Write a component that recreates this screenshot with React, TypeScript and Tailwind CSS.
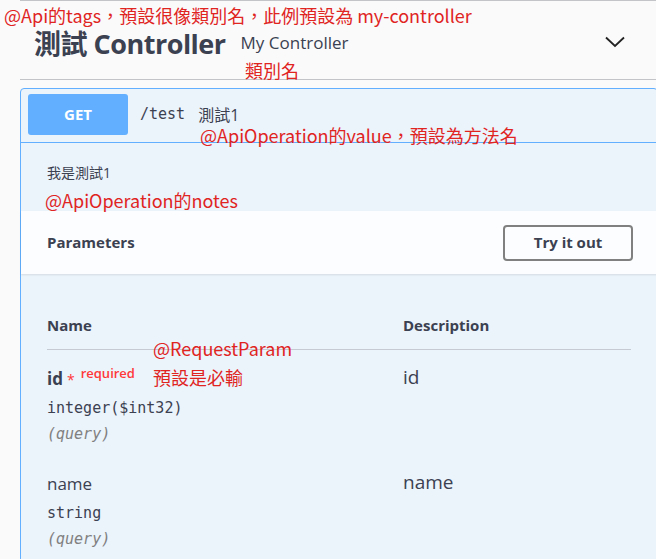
import React from "react";

const sans = "font-['Open_Sans','Noto_Sans_CJK_TC',sans-serif]";
const mono = "font-['DejaVu_Sans_Mono','Noto_Sans_CJK_TC',monospace]";
const note =
  "absolute whitespace-nowrap font-['Noto_Sans_CJK_TC','Noto_Sans',sans-serif] text-[18px] leading-[22px] text-[#e0241f]";

function Chevron() {
  return (
    <svg width="22" height="14" viewBox="0 0 22 14" fill="none">
      <path d="M2 2.5 L11 11 L20 2.5" stroke="#222" strokeWidth="1.8" />
    </svg>
  );
}

function ParamRow({
  name,
  type,
  required,
  desc,
}: {
  name: string;
  type: string;
  required?: boolean;
  desc: string;
}) {
  return (
    <div className="flex">
      <div className="w-[356px]">
        <div className="flex items-start h-[22px]">
          <span
            className={
              required
                ? "text-[17px] leading-[22px] font-bold text-[#3b4151]"
                : "text-[17px] leading-[22px] text-[#3b4151]"
            }
          >
            {name}
          </span>
          {required && (
            <>
              <span className="ml-[4px] mt-[2px] text-[14px] leading-[20px] text-[#ff3838]">*</span>
              <span className="ml-[6px] mt-[-5px] text-[13px] font-semibold leading-[20px] text-[#ff3838]">
                required
              </span>
            </>
          )}
        </div>
        <div className={`${mono} mt-[9px] text-[15px] leading-[18px] text-[#3b4151]`}>{type}</div>
        <div className={`${mono} mt-[8px] text-[15px] italic leading-[18px] text-[#808080]`}>(query)</div>
      </div>
      <div className="mt-[-2px] text-[19px] leading-[22px] text-[#3b4151]">{desc}</div>
    </div>
  );
}

export default function App() {
  return (
    <div className={`relative h-[559px] w-[656px] overflow-hidden bg-[#fafafa] ${sans}`}>
      <div className="w-[680px] pl-[20px]">
        {/* tag header (previous section's divider shows at top) */}
        <div className="h-[80px] w-[638px] border-t border-b border-[#c2c4c8] pt-[15px]">
          <div className="flex h-[56px] items-center pl-[14px] pr-[32px]">
            <span className="text-[27px] font-bold tracking-[-0.5px] text-[#3b4151]">測試 Controller</span>
            <span className="ml-[15px] mt-[-2px] text-[17px] text-[#3b4151]">My Controller</span>
            <span className="flex-1" />
            <span className="mt-[-4px]">
              <Chevron />
            </span>
          </div>
        </div>

        {/* operation block */}
        <div className="mt-[8px] w-[638px] rounded-[4px] border border-[#61affe] bg-[#ebf3fb]">
          <div className="flex items-center border-b border-[#61affe] pl-[7px] pb-[7px] pt-[5px]">
            <div className="flex h-[41px] w-[100px] items-center justify-center rounded-[3px] bg-[#61affe] text-[15px] font-bold text-white">
              GET
            </div>
            <span className={`${mono} ml-[12px] text-[15px] text-[#3b4151]`}>/test</span>
            <span className="ml-[13px] text-[16px] text-[#3b4151]">測試1</span>
          </div>

          <div className="px-[26px] pt-[20px] pb-[28px] text-[14px] leading-[20px] text-[#3b4151]">我是測試1</div>

          {/* parameters header */}
          <div className="flex h-[63px] items-center justify-between bg-white/80 pl-[26px] pr-[24px] shadow-[0_1px_2px_rgba(0,0,0,0.1)]">
            <span className="text-[15px] font-bold text-[#3b4151]">Parameters</span>
            <button className="flex h-[36px] w-[130px] items-center justify-center rounded-[4px] border-2 border-[#808080] text-[15px] font-bold text-[#3b4151]">
              Try it out
            </button>
          </div>

          {/* parameters table */}
          <div className="pl-[26px] pr-[26px]">
            <div className="flex border-b border-[#c6cbd3] pb-[14px] pt-[41px] text-[15px] font-bold leading-[20px] text-[#3b4151]">
              <span className="w-[356px]">Name</span>
              <span>Description</span>
            </div>
            <div className="pt-[18px]">
              <ParamRow name="id" type="integer($int32)" required desc="id" />
            </div>
            <div className="pt-[30px]">
              <ParamRow name="name" type="string" desc="name" />
            </div>
            <div className="h-[40px]" />
          </div>
        </div>
      </div>

      {/* annotations */}
      <span className={`${note} left-[4px] top-[4px]`}>@Api的tags，預設很像類別名，此例預設為 my-controller</span>
      <span className={`${note} left-[245px] top-[59px]`}>類別名</span>
      <span className={`${note} left-[200px] top-[124px]`}>@ApiOperation的value，預設為方法名</span>
      <span className={`${note} left-[45px] top-[189px]`}>@ApiOperation的notes</span>
      <span className={`${note} left-[153px] top-[337px]`}>@RequestParam</span>
      <span className={`${note} left-[153px] top-[366px]`}>預設是必輸</span>
    </div>
  );
}
